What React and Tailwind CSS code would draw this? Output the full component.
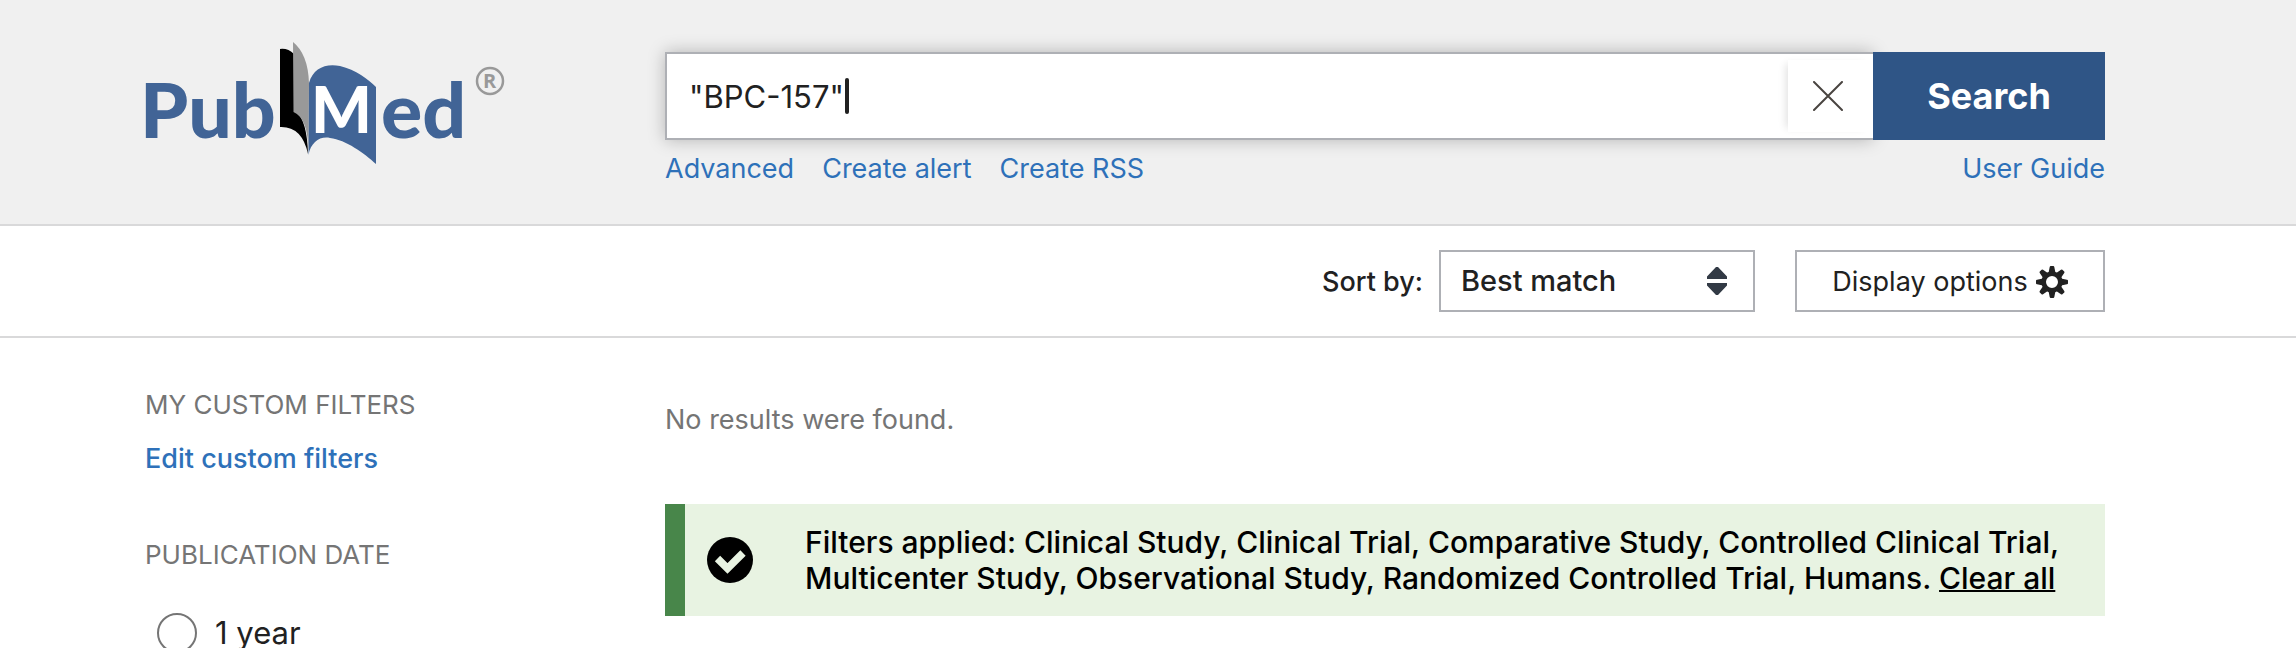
import React from 'react';

const searchLinks = ['Advanced', 'Create alert', 'Create RSS'];

const appliedFilters = [
  'Clinical Study',
  'Clinical Trial',
  'Comparative Study',
  'Controlled Clinical Trial',
  'Multicenter Study',
  'Observational Study',
  'Randomized Controlled Trial',
  'Humans',
];

function Logo() {
  return (
    <svg width="390" height="150" viewBox="0 0 390 150" role="img" aria-label="PubMed">
      <g fontFamily="Lato, sans-serif" fontWeight="900" fill="#416496">
        <text x="10" y="108" fontSize="77">Pub</text>
        <text x="251" y="108" fontSize="77">ed</text>
      </g>
      <path d="M150 19 Q158 18 164 24 L166 82 Q177 90 178 124 Q172 96 150 97 Z" fill="#000" />
      <path d="M163 12 Q178 24 179 53 L178.500 122 Q178 88 163.500 82 Z" fill="#999" />
      <path d="M179 53 C183 38 196 33 210 36 C226 40 238 49 246 57 L246 134 C234 123 216 110 200 108 C190 106 181 112 178.500 125 Z" fill="#416496" />
      <text x="181" y="103" fontFamily="Lato, sans-serif" fontWeight="900" fontSize="64" fill="#fff">M</text>
      <circle cx="360" cy="51" r="13" fill="none" stroke="#999" strokeWidth="2.500" />
      <text x="353" y="58" fontFamily="'Open Sans', sans-serif" fontWeight="700" fontSize="20" fill="#999">R</text>
    </svg>
  );
}

function GearIcon() {
  return (
    <svg width="32" height="32" viewBox="-16 -16 32 32" fill="#212121" aria-hidden="true">
      {[0, 45, 90, 135, 180, 225, 270, 315].map((angle) => (
        <path key={angle} d="M-3.500 -9 L-2.300 -15 Q-2.100 -16 -1.300 -16 H1.300 Q2.100 -16 2.300 -15 L3.500 -9 Z" transform={`rotate(${angle})`} />
      ))}
      <circle r="8.300" fill="none" stroke="#212121" strokeWidth="4.600" />
    </svg>
  );
}

function SearchHeader() {
  return (
    <header className="flex border-b-2 border-[#d9d9da] bg-[#f0f0f0] pt-[30px] pr-[191px] pb-[39px] pl-[145px]">
      <a href="#home" className="-ml-[15px] w-[535px] shrink-0">
        <Logo />
      </a>
      <form className="mt-[22px] flex-1" onSubmit={(e) => e.preventDefault()}>
        <div className="flex h-[88px]">
          <div className="relative flex flex-1 border-2 border-r-0 border-[#aeb0b5] bg-white shadow-[0_0_16px_rgba(0,0,0,0.25)]">
            <input
              type="text"
              aria-label="Search term"
              defaultValue={'"BPC-157"'}
              className="min-w-0 flex-1 pt-0.5 pl-[22px] text-[31px] text-[#212121] caret-transparent outline-none"
            />
            <span className="absolute top-6 left-[178px] h-9 w-1 rounded-sm bg-[#212121]" />
            <button type="button" aria-label="Clear search" className="my-[6px] flex w-[85px] items-center justify-center bg-white shadow-[-6px_0_8px_-4px_rgba(0,0,0,0.12)]">
              <svg width="30" height="30" viewBox="0 0 30 30" stroke="#494440" strokeWidth="2" strokeLinecap="round" className="-ml-[5px]">
                <path d="M1 1 L29 29 M29 1 L1 29" />
              </svg>
            </button>
          </div>
          <button type="submit" className="relative w-[232px] bg-[#2f5586] text-4xl font-bold text-white">
            Search
          </button>
        </div>
        <nav className="mt-[13px] flex gap-7 text-[27px] leading-8 text-[#2e71b9]">
          {searchLinks.map((label) => (
            <a key={label} href="#search">{label}</a>
          ))}
          <a href="#guide" className="ml-auto">User Guide</a>
        </nav>
      </form>
    </header>
  );
}

function Toolbar() {
  return (
    <div className="flex items-center justify-end border-b-2 border-[#d9d9da] py-6 pr-[191px] text-[#212121]">
      <label htmlFor="sort" className="mr-4 pt-0.5 text-[27px] font-medium">Sort by:</label>
      <div className="relative mr-10">
        <select id="sort" className="h-[62px] w-[316px] appearance-none border-2 border-[#aeb0b5] bg-white pl-5 text-[29px] font-medium">
          <option>Best match</option>
          <option>Most recent</option>
        </select>
        <svg width="20" height="28" viewBox="0 0 20 28" fill="#323a45" className="pointer-events-none absolute top-[17px] right-7">
          <path d="M9 0 H11 L20 9.500 V12 H0 V9.500 Z M0 16 H20 V18.500 L11 28 H9 L0 18.500 Z" />
        </svg>
      </div>
      <button type="button" className="flex h-[62px] w-[310px] items-center justify-center gap-2 border-2 border-[#aeb0b5] pt-0.5 text-[27px]">
        Display options
        <GearIcon />
      </button>
    </div>
  );
}

function Sidebar() {
  return (
    <aside className="w-[520px] shrink-0 pt-[49px]">
      <h3 className="text-[26px] leading-9 text-[#757575]">MY CUSTOM FILTERS</h3>
      <a href="#filters" className="mt-[18px] block text-[27px] leading-9 font-medium text-[#2e71b9]">Edit custom filters</a>
      <h3 className="mt-[60px] text-[26px] leading-9 text-[#757575]">PUBLICATION DATE</h3>
      <label className="mt-10 flex items-center gap-[18px] pl-3 text-[31px] leading-10 text-[#212121]">
        <input type="radio" name="date" className="size-10 appearance-none rounded-full border-2 border-[#757575]" />
        1 year
      </label>
    </aside>
  );
}

function Results() {
  return (
    <main className="min-w-0 flex-1 pt-16">
      <p className="text-[27px] leading-9 text-[#757575]">No results were found.</p>
      <div className="mt-[66px] flex items-center border-l-[20px] border-[#48864a] bg-[#e8f3e2] py-5 pl-[22px] text-black">
        <svg width="46" height="46" viewBox="0 0 46 46" className="shrink-0">
          <circle cx="23" cy="23" r="23" />
          <path d="M10.500 21.500 L20.500 31.500 L36 16" fill="none" stroke="#e8f3e2" strokeWidth="7.500" />
        </svg>
        <p className="ml-[52px] text-[30px] leading-9 font-medium">
          Filters applied: {appliedFilters.join(', ')}.{' '}
          <a href="#clear" className="underline decoration-2">Clear all</a>
        </p>
      </div>
    </main>
  );
}

export default function App() {
  return (
    <div className="h-screen overflow-hidden bg-white font-['Inter',sans-serif]">
      <SearchHeader />
      <Toolbar />
      <div className="flex pr-[191px] pl-[145px]">
        <Sidebar />
        <Results />
      </div>
    </div>
  );
}
